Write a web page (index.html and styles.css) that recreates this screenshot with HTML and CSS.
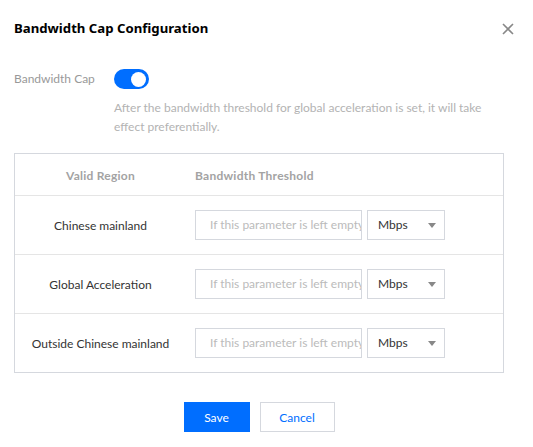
FILE: index.html
```html
<!DOCTYPE html>
<html>
<head>
<meta charset="utf-8">
<link rel="stylesheet" href="styles.css">
</head>
<body>
<div class="dialog">
  <div class="header">
    <h1 class="title">Bandwidth Cap Configuration</h1>
    <svg class="close" width="12" height="12" viewBox="0 0 12 12"><path d="M1 1L11 11M11 1L1 11" stroke="#888" stroke-width="1.6" fill="none"/></svg>
  </div>
  <div class="form-row">
    <div class="label">Bandwidth Cap</div>
    <div class="control">
      <div class="switch"><span class="knob"></span></div>
      <p class="help">After the bandwidth threshold for global acceleration is set, it will take effect preferentially.</p>
    </div>
  </div>
  <div class="table">
    <div class="row head">
      <div class="c1">Valid Region</div>
      <div class="c2">Bandwidth Threshold</div>
    </div>
    <div class="row">
      <div class="c1">Chinese mainland</div>
      <div class="c2"><div class="input">If this parameter is left empty</div><div class="select">Mbps<span class="arrow"></span></div></div>
    </div>
    <div class="row">
      <div class="c1">Global Acceleration</div>
      <div class="c2"><div class="input">If this parameter is left empty</div><div class="select">Mbps<span class="arrow"></span></div></div>
    </div>
    <div class="row">
      <div class="c1">Outside Chinese mainland</div>
      <div class="c2"><div class="input">If this parameter is left empty</div><div class="select">Mbps<span class="arrow"></span></div></div>
    </div>
  </div>
  <div class="footer">
    <button class="btn primary">Save</button>
    <button class="btn cancel">Cancel</button>
  </div>
</div>
</body>
</html>
```
FILE: styles.css
```css
* { box-sizing: border-box; }
body {
  margin: 0;
  background: #fff;
  font-family: "Lato", "Noto Sans", sans-serif;
  font-size: 12px;
  color: #333;
}
.dialog {
  width: 533px;
  padding: 17px 19px 0 14px;
}
.header {
  display: flex;
  justify-content: space-between;
  align-items: center;
  height: 22px;
}
.title {
  margin: 0;
  font-family: "Noto Sans", sans-serif;
  font-size: 13.2px;
  font-weight: 700;
  color: #000;
  line-height: 22px;
}
.close { margin-top: 2px; }
.form-row {
  display: flex;
  margin-top: 30px;
}
.label {
  width: 100px;
  color: #999;
  line-height: 20px;
}
.control { flex: 1; }
.switch {
  width: 35px;
  height: 20px;
  border-radius: 10px;
  background: #006eff;
  position: relative;
}
.knob {
  position: absolute;
  right: 3px;
  top: 2.5px;
  width: 15px;
  height: 15px;
  border-radius: 50%;
  background: #fff;
}
.help {
  margin: 9px 0 0;
  color: #b3b3b3;
  line-height: 19px;
  padding-right: 20px;
}
.table {
  margin-top: 17px;
  width: 490px;
  border: 1px solid #d5d8de;
}
.row {
  display: flex;
  align-items: center;
  height: 59px;
  border-top: 1px solid #e5e5e5;
}
.row.head {
  height: 41px;
  border-top: none;
  color: #a3a3a3;
  font-weight: 700;
  letter-spacing: 0.25px;
  padding-top: 1px;
}
.c1 {
  width: 171px;
  text-align: center;
}
.c2 {
  padding-left: 9px;
  display: flex;
  gap: 5px;
}
.input {
  width: 167px;
  height: 30px;
  border: 1px solid #d5d8de;
  padding: 0 4px 0 14px;
  line-height: 28px;
  color: #bbb;
  white-space: nowrap;
  overflow: hidden;
}
.select {
  width: 78px;
  height: 30px;
  border: 1px solid #d5d8de;
  padding: 0 8px 0 10px;
  line-height: 28px;
  color: #333;
  display: flex;
  justify-content: space-between;
  align-items: center;
}
.arrow {
  width: 0;
  height: 0;
  border-left: 4px solid transparent;
  border-right: 4px solid transparent;
  border-top: 5px solid #888;
}
.footer {
  display: flex;
  justify-content: center;
  gap: 10px;
  width: 490px;
  margin-top: 29px;
}
.btn {
  height: 30px;
  padding: 0;
  border: 1px solid #d5d8de;
  background: #fff;
  color: #006eff;
  font-family: inherit;
  font-size: 12px;
}
.btn.primary {
  width: 66px;
  background: #006eff;
  border-color: #006eff;
  color: #fff;
}
.btn.cancel { width: 75px; }
```
